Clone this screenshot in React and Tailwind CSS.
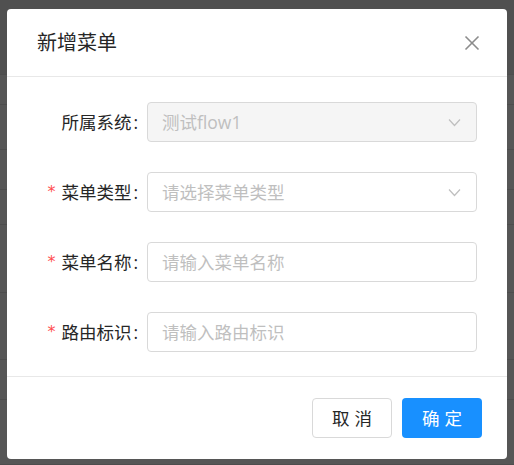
const font = 'font-["Open_Sans","Noto_Sans_CJK_SC",sans-serif]'

// faint rows of the page behind the mask
const bgRows = [75, 30, 45, 40, 35, 68, 67, 40, 65]

function Chevron() {
  return (
    <svg width="13" height="9" viewBox="0 0 13 9" fill="none" stroke="#bfbfbf" strokeWidth="1.2">
      <polyline points="1,1.5 6.5,7.5 12,1.5" />
    </svg>
  )
}

function CloseIcon() {
  return (
    <svg width="16" height="16" viewBox="0 0 16 16" fill="none" stroke="#8c8c8c" strokeWidth="1.6">
      <line x1="1.5" y1="1.5" x2="14.5" y2="14.5" />
      <line x1="14.5" y1="1.5" x2="1.5" y2="14.5" />
    </svg>
  )
}

function Field({ label, required, children }) {
  return (
    <div className="flex h-[40px] items-center">
      <div className="flex w-[140px] items-center justify-end pr-[9px] text-[17.5px] leading-[24px] text-[#262626]">
        {required && (
          <span className="mr-[6px] font-['DejaVu_Sans',sans-serif] text-[16px] leading-none text-[#ff4d4f]">*</span>
        )}
        <span>{label}</span>
        <span className="ml-[2px]">:</span>
      </div>
      {children}
    </div>
  )
}

function SelectBox({ value, placeholder, disabled }) {
  return (
    <div
      className={`flex h-[40px] w-[330px] items-center justify-between rounded-[4px] border border-[#d9d9d9] pl-[14px] pr-[15px] text-[17.5px] ${
        disabled ? 'bg-[#f5f5f5]' : 'bg-white'
      }`}
    >
      <span className="text-[#bfbfbf]">{value || placeholder}</span>
      <Chevron />
    </div>
  )
}

function TextBox({ placeholder }) {
  return (
    <div className="flex h-[40px] w-[330px] items-center rounded-[4px] border border-[#d9d9d9] bg-white pl-[14px] text-[17.5px] text-[#bfbfbf]">
      {placeholder}
    </div>
  )
}

export default function App() {
  return (
    <div className={`relative h-[465px] w-[514px] overflow-hidden bg-[#555555] ${font}`}>
      <div className="flex flex-col">
        {bgRows.map((h, i) => (
          <div
            key={i}
            style={{ height: h }}
            className={`border-b border-[#4d4d4d] ${i === 0 ? 'bg-[#505050]' : 'bg-[#565656]'}`}
          />
        ))}
      </div>

      <div className="absolute inset-0 pl-[7px] pt-[9px]">
        <div className="flex h-[450px] w-[500px] flex-col rounded-[4px] bg-white">
          <div className="flex h-[68px] items-center justify-between border-b border-[#e8e8e8] pl-[30px] pr-[27px]">
            <h2 className="text-[20px] leading-[28px] text-[#262626]">新增菜单</h2>
            <CloseIcon />
          </div>

          <div className="flex flex-col gap-[30px] pb-[24px] pt-[25px]">
            <Field label="所属系统">
              <SelectBox value="测试flow1" disabled />
            </Field>
            <Field label="菜单类型" required>
              <SelectBox placeholder="请选择菜单类型" />
            </Field>
            <Field label="菜单名称" required>
              <TextBox placeholder="请输入菜单名称" />
            </Field>
            <Field label="路由标识" required>
              <TextBox placeholder="请输入路由标识" />
            </Field>
          </div>

          <div className="flex justify-end gap-[10px] border-t border-[#e8e8e8] pb-[20px] pr-[25px] pt-[21px]">
            <button className="flex h-[40px] w-[80px] items-center justify-center rounded-[4px] border border-[#d9d9d9] bg-white text-[17.5px] tracking-[0.3em] text-[#262626]">
              <span className="mr-[-0.3em]">取消</span>
            </button>
            <button className="flex h-[40px] w-[80px] items-center justify-center rounded-[4px] bg-[#1890ff] text-[17.5px] tracking-[0.3em] text-white">
              <span className="mr-[-0.3em]">确定</span>
            </button>
          </div>
        </div>
      </div>
    </div>
  )
}
